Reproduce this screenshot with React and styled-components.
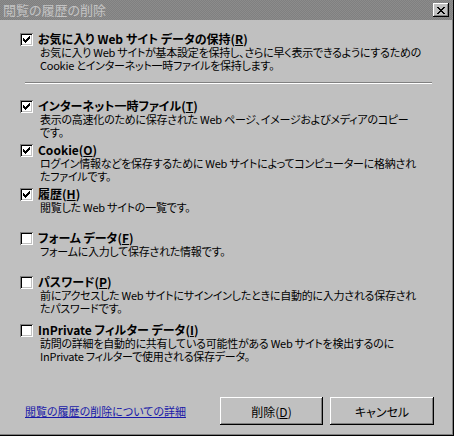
import React from 'react';
import styled, { createGlobalStyle } from 'styled-components';

const Global = createGlobalStyle`
  html, body { margin: 0; padding: 0; background: #ffffff; }
  body {
    font-family: "Noto Sans CJK JP", "Liberation Sans", sans-serif;
    font-size: 12px;
    color: #000;
  }
`;

const Window = styled.div`
  width: 454px;
  height: 436px;
  box-sizing: border-box;
  background: #c0c0c0;
  border-right: 1px solid #000;
  border-bottom: 1px solid #000;
  box-shadow: inset -1px -1px 0 #808080;
  display: flex;
  flex-direction: column;
`;

const TitleBar = styled.div`
  height: 20px;
  flex: none;
  display: flex;
  align-items: center;
  justify-content: space-between;
  padding: 0 3px 0 3px;
  background-color: #848484;
  background-image: repeating-conic-gradient(#808080 0 25%, #8c8c8c 0 50%);
  background-size: 2px 2px;
  color: #c4c4c4;
  font-size: 13px;
  line-height: 20px;
  font-feature-settings: "palt";
`;

const CloseButton = styled.div`
  width: 16px;
  height: 14px;
  box-sizing: border-box;
  background: #c0c0c0;
  box-shadow: inset -1px -1px 0 #000, inset 1px 1px 0 #fff, inset -2px -2px 0 #808080;
  display: flex;
  align-items: center;
  justify-content: center;
  margin-right: 1px;
`;

const Body = styled.div`
  display: flex;
  flex-direction: column;
  padding: 12px 0 0 20px;
`;

const Item = styled.div`
  display: grid;
  grid-template-columns: 13px 1fr;
  column-gap: 5px;
  height: ${p => p.$h || 44}px;
  margin-top: ${p => p.$mt || 0}px;
  align-content: start;
`;

const Box = styled.span`
  width: 13px;
  height: 13px;
  box-sizing: border-box;
  background: #fff;
  box-shadow: inset 1px 1px 0 #808080, inset -1px -1px 0 #fff, inset 2px 2px 0 #000, inset -2px -2px 0 #c0c0c0;
  display: flex;
  align-items: center;
  justify-content: center;
  margin-top: 1px;
`;

const Label = styled.div`
  font-weight: 700;
  line-height: 14px;
  white-space: nowrap;
  font-feature-settings: "palt";
`;

const Desc = styled.div`
  grid-column: 2;
  margin-left: 2px;
  font-size: 11px;
  letter-spacing: -0.25px;
  line-height: 13px;
  white-space: nowrap;
  font-feature-settings: "palt";
`;

const U = styled.span`
  text-decoration: underline;
`;

const Separator = styled.div`
  margin: 10px 0 15px 5px;
  width: 407px;
  height: 1px;
  background: #808080;
  border-bottom: 1px solid #fff;
`;

const Footer = styled.div`
  margin-top: auto;
  display: flex;
  align-items: center;
  padding: 0 19px 10px 25px;
`;

const Link = styled.a`
  color: #1a1aa8;
  font-size: 11px;
  text-decoration: underline;
  font-feature-settings: "palt";
  white-space: nowrap;
  cursor: pointer;
`;

const Buttons = styled.div`
  margin-left: auto;
  display: flex;
  gap: 7px;
`;

const Button = styled.button`
  width: ${p => p.$w}px;
  height: 28px;
  box-sizing: border-box;
  border: none;
  padding: 0;
  background: #c0c0c0;
  box-shadow: inset -1px -1px 0 #000, inset 1px 1px 0 #fff, inset -2px -2px 0 #808080;
  font-family: inherit;
  font-size: 12px;
  color: #000;
  font-feature-settings: "palt";
`;

const Check = () => (
  <svg width="7" height="7" viewBox="0 0 7 7" shapeRendering="crispEdges">
    <rect x="0" y="2" width="1" height="3" fill="#000" />
    <rect x="1" y="3" width="1" height="3" fill="#000" />
    <rect x="2" y="4" width="1" height="3" fill="#000" />
    <rect x="3" y="3" width="1" height="3" fill="#000" />
    <rect x="4" y="2" width="1" height="3" fill="#000" />
    <rect x="5" y="1" width="1" height="3" fill="#000" />
    <rect x="6" y="0" width="1" height="3" fill="#000" />
  </svg>
);

const CheckBox = ({ checked }) => <Box>{checked && <Check />}</Box>;

const first = {
  checked: true,
  label: ['お気に入り Web サイト データの保持(', 'R', ')'],
  desc: ['お気に入り Web サイトが基本設定を保持し、さらに早く表示できるようにするための', 'Cookie とインターネット一時ファイルを保持します。'],
};

const rest = [
  {
    checked: true,
    label: ['インターネット一時ファイル(', 'T', ')'],
    desc: ['表示の高速化のために保存された Web ページ、イメージおよびメディアのコピー', 'です。'],
  },
  {
    checked: true,
    label: ['Cookie(', 'O', ')'],
    desc: ['ログイン情報などを保存するために Web サイトによってコンピューターに格納され', 'たファイルです。'],
  },
  {
    checked: true,
    label: ['履歴(', 'H', ')'],
    desc: ['閲覧した Web サイトの一覧です。'],
  },
  {
    checked: false,
    label: ['フォーム データ(', 'F', ')'],
    desc: ['フォームに入力して保存された情報です。'],
  },
  {
    checked: false,
    label: ['パスワード(', 'P', ')'],
    desc: ['前にアクセスした Web サイトにサインインしたときに自動的に入力される保存され', 'たパスワードです。'],
  },
  {
    checked: false,
    mt: 4,
    label: ['InPrivate フィルター データ(', 'I', ')'],
    desc: ['訪問の詳細を自動的に共有している可能性がある Web サイトを検出するのに', 'InPrivate フィルターで使用される保存データ。'],
  },
];

const Row = ({ item, h }) => (
  <Item $h={h} $mt={item.mt}>
    <CheckBox checked={item.checked} />
    <Label>
      {item.label[0]}
      <U>{item.label[1]}</U>
      {item.label[2]}
    </Label>
    <Desc>
      {item.desc.map((d, i) => (
        <div key={i}>{d}</div>
      ))}
    </Desc>
  </Item>
);

export default function App() {
  return (
    <>
      <Global />
      <Window>
        <TitleBar>
          <span>閲覧の履歴の削除</span>
          <CloseButton>
            <svg width="8" height="7" viewBox="0 0 8 7" shapeRendering="crispEdges">
              <path d="M0 0h2v1h-2zM6 0h2v1h-2zM1 1h2v1h-2zM5 1h2v1h-2zM2 2h4v1h-4zM3 3h2v1h-2zM2 4h4v1h-4zM1 5h2v1h-2zM5 5h2v1h-2zM0 6h2v1h-2zM6 6h2v1h-2z" fill="#000" />
            </svg>
          </CloseButton>
        </TitleBar>
        <Body>
          <Row item={first} h={40} />
          <Separator />
          {rest.map((it, i) => (
            <Row key={i} item={it} />
          ))}
        </Body>
        <Footer>
          <Link>閲覧の履歴の削除についての詳細</Link>
          <Buttons>
            <Button $w={103}>
              削除(<U>D</U>)
            </Button>
            <Button $w={104}>キャンセル</Button>
          </Buttons>
        </Footer>
      </Window>
    </>
  );
}
